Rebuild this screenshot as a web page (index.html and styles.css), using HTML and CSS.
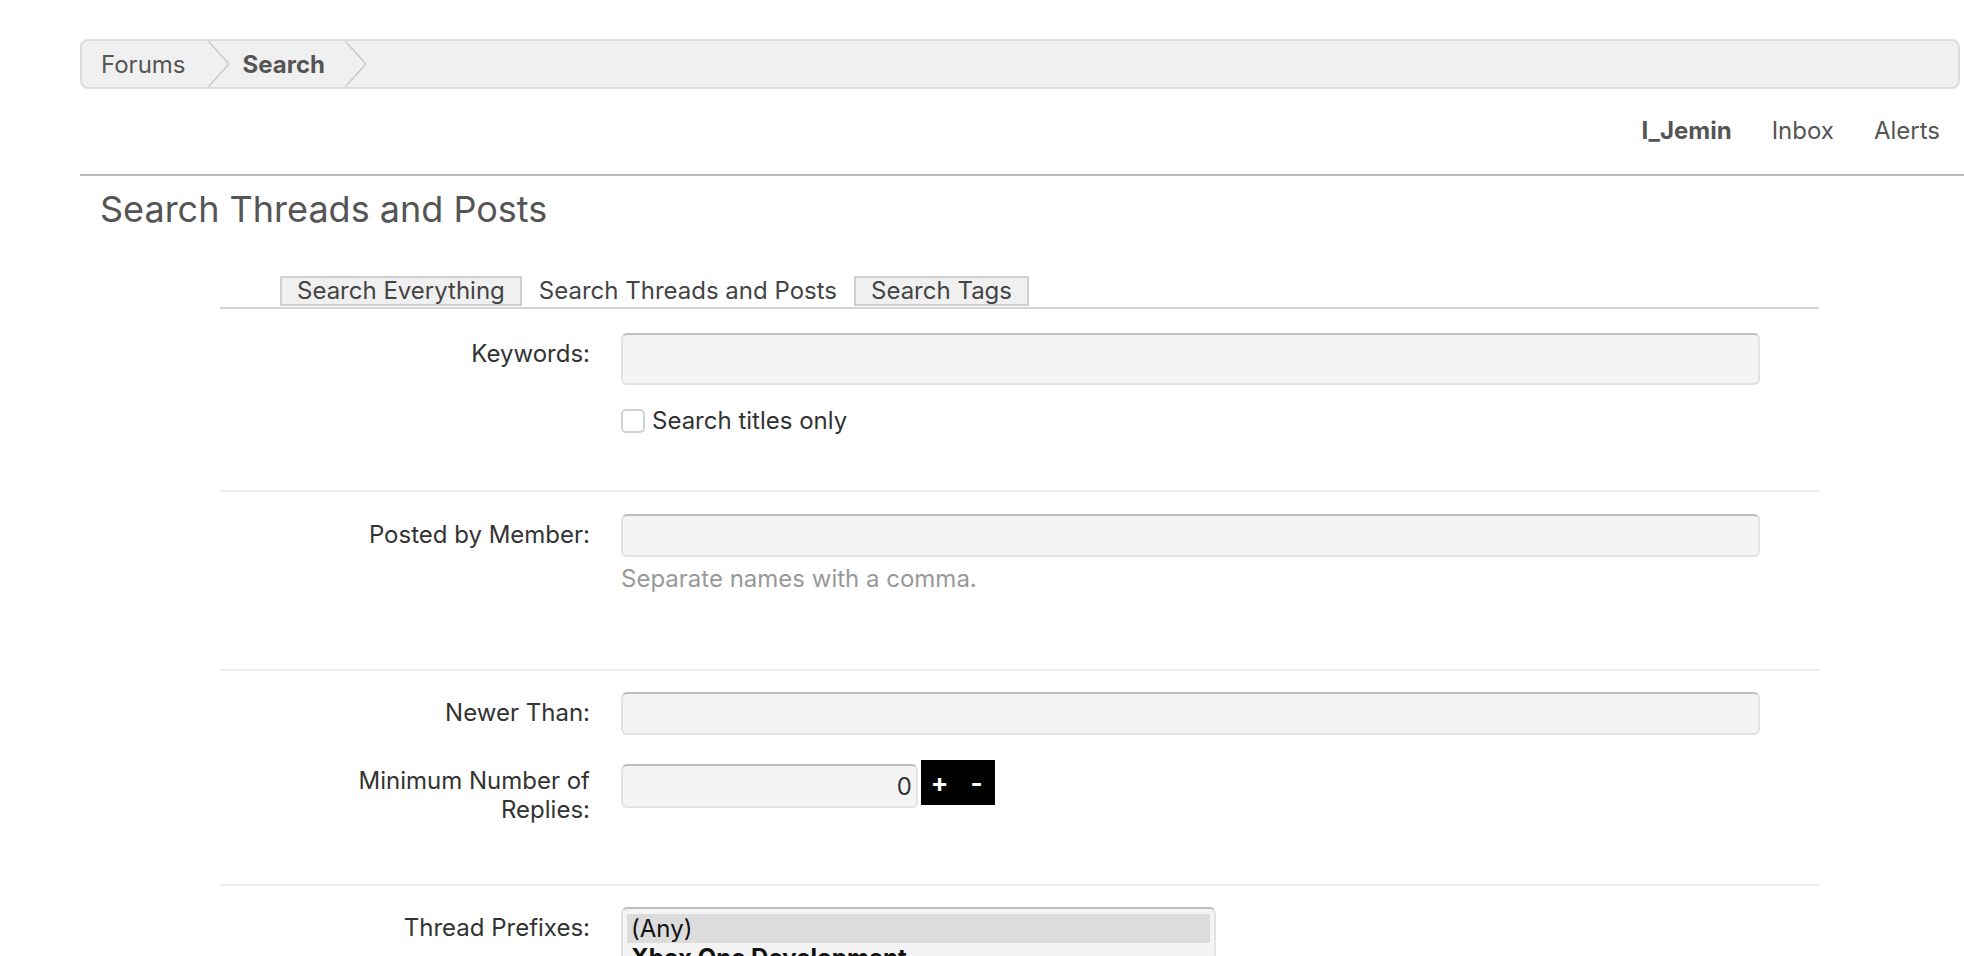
FILE: index.html
```html
<!DOCTYPE html>
<html lang="en">
<head>
    <meta charset="UTF-8">
    <title>Search Threads and Posts</title>
    <link rel="stylesheet" href="styles.css">
</head>
<body>
    <div class="page">
        <nav class="crumbs">
            <a class="crumb first" href="#">Forums</a>
            <svg class="chev" viewBox="0 0 22 46" preserveAspectRatio="none"><polyline points="0,0 21,23 0,46"/></svg>
            <a class="crumb current" href="#">Search</a>
            <svg class="chev" viewBox="0 0 22 46" preserveAspectRatio="none"><polyline points="0,0 21,23 0,46"/></svg>
        </nav>

        <div class="usernav">
            <a class="user" href="#">I_Jemin</a>
            <a href="#">Inbox</a>
            <a href="#">Alerts</a>
        </div>

        <h1 class="title">Search Threads and Posts</h1>

        <div class="form-wrap">
            <ul class="tabs">
                <li class="tab">Search Everything</li>
                <li class="tab active">Search Threads and Posts</li>
                <li class="tab">Search Tags</li>
            </ul>

            <form class="search-form">
                <div class="group g-keywords">
                    <div class="row">
                        <div class="label">Keywords:</div>
                        <div class="field">
                            <input type="text" class="text tall">
                            <label class="check"><span class="box"></span>Search titles only</label>
                        </div>
                    </div>
                </div>

                <div class="group g-member">
                    <div class="row">
                        <div class="label">Posted by Member:</div>
                        <div class="field">
                            <input type="text" class="text">
                            <p class="hint">Separate names with a comma.</p>
                        </div>
                    </div>
                </div>

                <div class="group g-dates">
                    <div class="row">
                        <div class="label">Newer Than:</div>
                        <div class="field">
                            <input type="text" class="text">
                        </div>
                    </div>
                    <div class="row">
                        <div class="label two-line">Minimum Number of<br>Replies:</div>
                        <div class="field spinner">
                            <input type="text" class="text number" value="0">
                            <div class="spin-btns">
                                <button type="button">+</button>
                                <button type="button">-</button>
                            </div>
                        </div>
                    </div>
                </div>

                <div class="group g-prefix">
                    <div class="row">
                        <div class="label">Thread Prefixes:</div>
                        <div class="field">
                            <div class="listbox">
                                <div class="opt selected">(Any)</div>
                                <div class="opt group-name">Xbox One Development</div>
                                <div class="opt">Question</div>
                                <div class="opt">Tutorial</div>
                            </div>
                        </div>
                    </div>
                </div>
            </form>
        </div>
    </div>
</body>
</html>
```

FILE: styles.css
```css
body {
    margin: 0;
    font-family: Inter, "Noto Sans", sans-serif;
    color: #333;
    background-color: #fff;
}
a {
    color: #555;
    text-decoration: none;
}
.page {
    padding: 39px 0 0 80px;
}

/* breadcrumb */
.crumbs {
    display: flex;
    height: 46px;
    margin-right: 4px;
    background-color: #f0f0f0;
    border: 2px solid #dcdcdc;
    border-radius: 8px;
}
.crumb {
    display: flex;
    align-items: center;
    font-size: 24px;
    color: #555;
}
.crumb.first {
    padding: 0 22px 0 19px;
}
.crumb.current {
    font-weight: bold;
    padding: 0 20px 0 13px;
}
.chev {
    width: 22px;
    height: 46px;
}
.chev polyline {
    fill: none;
    stroke: #c9c9c9;
    stroke-width: 1.5;
}

/* user links */
.usernav {
    display: flex;
    justify-content: flex-end;
    gap: 40px;
    padding: 27px 24px 29px 0;
    line-height: 29px;
    font-size: 24px;
    border-bottom: 2px solid #bbb;
}
.usernav .user {
    font-weight: bold;
}

.title {
    margin: 11px 0 0 20px;
    font-size: 36px;
    line-height: 45px;
    font-weight: normal;
    color: #555;
}

/* form */
.form-wrap {
    width: 1599px;
    margin: 44px 0 0 140px;
}
.tabs {
    display: flex;
    list-style: none;
    margin: 0;
    padding: 0 0 1px 60px;
    border-bottom: 2px solid #d4d4d4;
}
.tab {
    font-size: 24px;
    line-height: 26px;
    padding: 0 15px;
    color: #444;
    background-color: #f0f0f0;
    border: 2px solid #d0d0d0;
}
.tab.active {
    background-color: #fff;
    border-color: transparent;
}

.group {
    display: flex;
    flex-direction: column;
    gap: 29px;
    padding: 21px 0 60px;
    border-bottom: 2px solid #eee;
}
.g-keywords {
    padding: 24px 0 56px;
}
.g-member {
    padding: 22px 0 77px;
}
.g-prefix {
    border-bottom: none;
}
.row {
    display: grid;
    grid-template-columns: 370px 1139px;
    column-gap: 31px;
}
.label {
    text-align: right;
    font-size: 24px;
    line-height: 29px;
    padding-top: 6px;
}
.label.two-line {
    padding-top: 2px;
}
.text {
    display: block;
    width: 100%;
    height: 43px;
    box-sizing: border-box;
    padding: 0 10px;
    font-family: inherit;
    font-size: 24px;
    color: #333;
    background-color: #f4f4f4;
    border: 2px solid #e3e3e3;
    border-top-color: #bdbdbd;
    border-radius: 6px;
}
.text.tall {
    height: 52px;
}
.check {
    display: flex;
    align-items: center;
    gap: 7px;
    margin-top: 23px;
    font-size: 24px;
    line-height: 26px;
}
.box {
    width: 20px;
    height: 20px;
    background-color: #fff;
    border: 2px solid #d2d2d2;
    border-radius: 5px;
}
.hint {
    margin: 9px 0 0;
    font-size: 24px;
    line-height: 26px;
    color: #999;
}

.spinner {
    display: flex;
    align-items: flex-start;
    gap: 3px;
}
.text.number {
    width: 297px;
    height: 44px;
    padding-right: 4px;
    text-align: right;
}
.spin-btns {
    display: flex;
    margin-top: -4px;
    background-color: #000;
}
.spin-btns button {
    width: 37px;
    height: 45px;
    padding: 0;
    border: none;
    background-color: #000;
    color: #fff;
    font-family: inherit;
    font-size: 26px;
    font-weight: bold;
    cursor: pointer;
}

.listbox {
    width: 595px;
    height: 220px;
    box-sizing: border-box;
    padding: 5px 4px;
    background-color: #f4f4f4;
    border: 2px solid #e3e3e3;
    border-top-color: #bdbdbd;
    border-radius: 6px;
}
.opt {
    font-size: 24px;
    line-height: 29px;
    padding-left: 4px;
    color: #111;
}
.opt.selected {
    background-color: #dcdcdc;
}
.opt.group-name {
    font-weight: bold;
}
```
